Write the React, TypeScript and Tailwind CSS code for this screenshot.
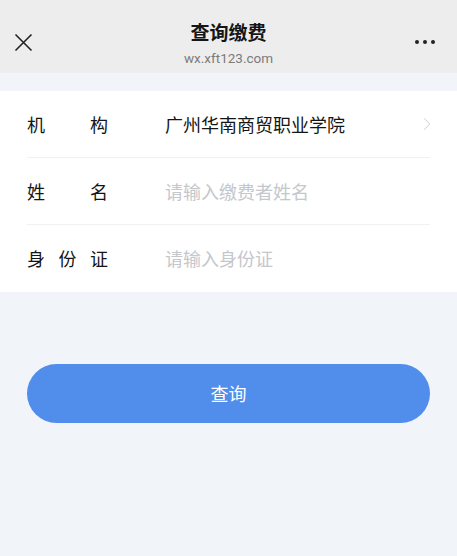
import { ChevronRight } from "lucide-react";

const rows = [
  { label: ["机", "构"], value: "广州华南商贸职业学院", placeholder: false, arrow: true },
  { label: ["姓", "名"], value: "请输入缴费者姓名", placeholder: true, arrow: false },
  { label: ["身", "份", "证"], value: "请输入身份证", placeholder: true, arrow: false },
];

export default function App() {
  return (
    <div
      className="min-h-[556px] bg-[#f1f4f8] text-[#151515]"
      style={{ fontFamily: '"Noto Sans CJK SC", "Noto Sans", sans-serif' }}
    >
      <header className="relative flex h-[73px] flex-col items-center bg-[#ededed] pt-[18px]">
        <button className="absolute left-[14px] top-[33px] text-[#222]">
          <svg width="19" height="19" viewBox="0 0 19 19" fill="none" stroke="currentColor" strokeWidth="1.6">
            <path d="M1.5 1.5 L17.5 17.5 M17.5 1.5 L1.5 17.5" />
          </svg>
        </button>
        <h1 className="text-[19px] font-bold leading-[28px]">查询缴费</h1>
        <p
          className="mt-[3px] text-[13.5px] leading-[18px] text-[#7b7b7b]"
          style={{ fontFamily: '"Roboto", "Noto Sans", sans-serif' }}
        >
          wx.xft123.com
        </p>
        <div className="absolute right-[22px] top-[40px] flex gap-[4px]">
          <span className="h-[4px] w-[4px] rounded-full bg-[#222]" />
          <span className="h-[4px] w-[4px] rounded-full bg-[#222]" />
          <span className="h-[4px] w-[4px] rounded-full bg-[#222]" />
        </div>
      </header>

      <section className="mt-[18px] bg-white px-[27px]">
        {rows.map((row, i) => (
          <div
            key={i}
            className={`flex h-[67px] items-center ${i < rows.length - 1 ? "border-b border-[#f1f1f1]" : ""}`}
          >
            <div className="flex w-[81px] justify-between text-[18px]">
              {row.label.map((ch) => (
                <span key={ch}>{ch}</span>
              ))}
            </div>
            <div
              className={`ml-[57px] flex-1 text-[18px] ${row.placeholder ? "text-[#c4c7cc]" : "text-[#151515]"}`}
            >
              {row.value}
            </div>
            {row.arrow && (
              <ChevronRight className="mr-[-8px] h-[22px] w-[22px] text-[#d5d5d5]" strokeWidth={1.1} />
            )}
          </div>
        ))}
      </section>

      <div className="px-[27px] pt-[72px]">
        <button className="flex h-[59px] w-full items-center justify-center rounded-full bg-[#518deb] text-[18px] text-white">
          查询
        </button>
      </div>
    </div>
  );
}
